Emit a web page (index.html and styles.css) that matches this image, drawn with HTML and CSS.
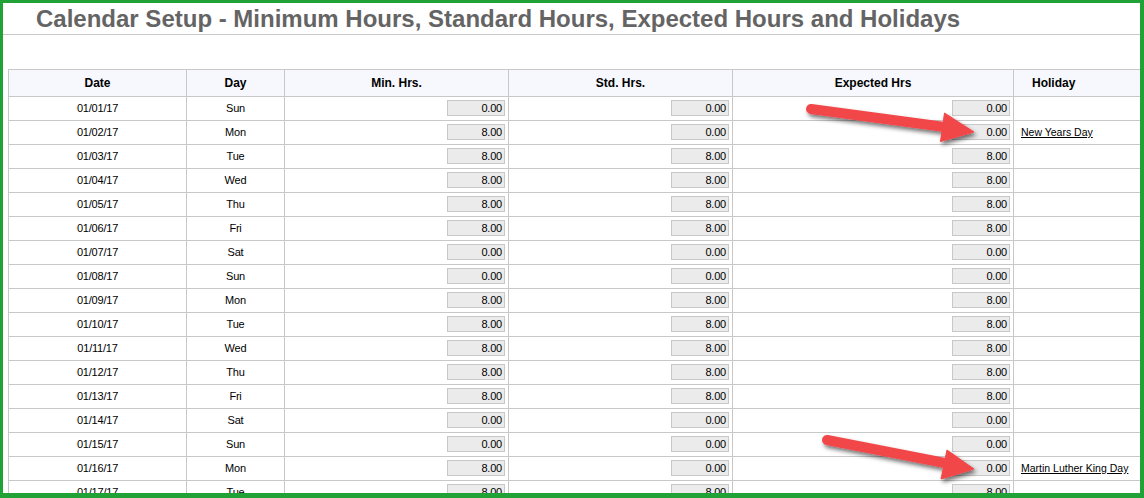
FILE: index.html
```html
<!DOCTYPE html>
<html>
<head>
<meta charset="utf-8">
<link rel="stylesheet" href="styles.css">
</head>
<body>
<div class="frame">
  <div class="title-bar"><h1 class="title">Calendar Setup - Minimum Hours, Standard Hours, Expected Hours and Holidays</h1></div>
  <div class="table-wrap">
    <table class="cal">
      <colgroup>
        <col class="c-date"><col class="c-day"><col class="c-min"><col class="c-std"><col class="c-exp"><col class="c-hol">
      </colgroup>
      <thead>
        <tr><th>Date</th><th>Day</th><th>Min. Hrs.</th><th>Std. Hrs.</th><th>Expected Hrs</th><th class="hol-h">Holiday</th></tr>
      </thead>
      <tbody>
        <tr><td>01/01/17</td><td>Sun</td><td class="num"><span class="box">0.00</span></td><td class="num"><span class="box">0.00</span></td><td class="num"><span class="box">0.00</span></td><td class="hol"></td></tr>
        <tr><td>01/02/17</td><td>Mon</td><td class="num"><span class="box">8.00</span></td><td class="num"><span class="box">0.00</span></td><td class="num"><span class="box">0.00</span></td><td class="hol"><a class="hol-link">New Years Day</a></td></tr>
        <tr><td>01/03/17</td><td>Tue</td><td class="num"><span class="box">8.00</span></td><td class="num"><span class="box">8.00</span></td><td class="num"><span class="box">8.00</span></td><td class="hol"></td></tr>
        <tr><td>01/04/17</td><td>Wed</td><td class="num"><span class="box">8.00</span></td><td class="num"><span class="box">8.00</span></td><td class="num"><span class="box">8.00</span></td><td class="hol"></td></tr>
        <tr><td>01/05/17</td><td>Thu</td><td class="num"><span class="box">8.00</span></td><td class="num"><span class="box">8.00</span></td><td class="num"><span class="box">8.00</span></td><td class="hol"></td></tr>
        <tr><td>01/06/17</td><td>Fri</td><td class="num"><span class="box">8.00</span></td><td class="num"><span class="box">8.00</span></td><td class="num"><span class="box">8.00</span></td><td class="hol"></td></tr>
        <tr><td>01/07/17</td><td>Sat</td><td class="num"><span class="box">0.00</span></td><td class="num"><span class="box">0.00</span></td><td class="num"><span class="box">0.00</span></td><td class="hol"></td></tr>
        <tr><td>01/08/17</td><td>Sun</td><td class="num"><span class="box">0.00</span></td><td class="num"><span class="box">0.00</span></td><td class="num"><span class="box">0.00</span></td><td class="hol"></td></tr>
        <tr><td>01/09/17</td><td>Mon</td><td class="num"><span class="box">8.00</span></td><td class="num"><span class="box">8.00</span></td><td class="num"><span class="box">8.00</span></td><td class="hol"></td></tr>
        <tr><td>01/10/17</td><td>Tue</td><td class="num"><span class="box">8.00</span></td><td class="num"><span class="box">8.00</span></td><td class="num"><span class="box">8.00</span></td><td class="hol"></td></tr>
        <tr><td>01/11/17</td><td>Wed</td><td class="num"><span class="box">8.00</span></td><td class="num"><span class="box">8.00</span></td><td class="num"><span class="box">8.00</span></td><td class="hol"></td></tr>
        <tr><td>01/12/17</td><td>Thu</td><td class="num"><span class="box">8.00</span></td><td class="num"><span class="box">8.00</span></td><td class="num"><span class="box">8.00</span></td><td class="hol"></td></tr>
        <tr><td>01/13/17</td><td>Fri</td><td class="num"><span class="box">8.00</span></td><td class="num"><span class="box">8.00</span></td><td class="num"><span class="box">8.00</span></td><td class="hol"></td></tr>
        <tr><td>01/14/17</td><td>Sat</td><td class="num"><span class="box">0.00</span></td><td class="num"><span class="box">0.00</span></td><td class="num"><span class="box">0.00</span></td><td class="hol"></td></tr>
        <tr><td>01/15/17</td><td>Sun</td><td class="num"><span class="box">0.00</span></td><td class="num"><span class="box">0.00</span></td><td class="num"><span class="box">0.00</span></td><td class="hol"></td></tr>
        <tr><td>01/16/17</td><td>Mon</td><td class="num"><span class="box">8.00</span></td><td class="num"><span class="box">0.00</span></td><td class="num"><span class="box">0.00</span></td><td class="hol"><a class="hol-link">Martin Luther King Day</a></td></tr>
        <tr><td>01/17/17</td><td>Tue</td><td class="num"><span class="box">8.00</span></td><td class="num"><span class="box">8.00</span></td><td class="num"><span class="box">8.00</span></td><td class="hol"></td></tr>
      </tbody>
    </table>
  </div>
  <svg class="arrows" width="1144" height="498" viewBox="0 0 1144 498" xmlns="http://www.w3.org/2000/svg">
    <defs>
      <filter id="shadow" x="-10%" y="-30%" width="130%" height="180%">
        <feDropShadow dx="2" dy="3" stdDeviation="2" flood-color="#000" flood-opacity="0.55"/>
      </filter>
    </defs>
    <g filter="url(#shadow)" fill="#f2474a" stroke="#f2474a">
      <line x1="811" y1="109" x2="945" y2="127" stroke-width="10" stroke-linecap="round"/>
      <polygon points="944.5,113 940.5,141.5 974,132" stroke-width="1" stroke-linejoin="round"/>
      <line x1="827" y1="440" x2="945" y2="463" stroke-width="10" stroke-linecap="round"/>
      <polygon points="947,450 941,479 974,469" stroke-width="1" stroke-linejoin="round"/>
    </g>
  </svg>
</div>
</body>
</html>
```

FILE: styles.css
```css
html, body {
  margin: 0;
  padding: 0;
  background: #ffffff;
}

.frame {
  position: relative;
  width: 1144px;
  height: 498px;
  box-sizing: border-box;
  border-style: solid;
  border-color: #21a236;
  border-width: 3px 4px 5px 3px;
  background: #ffffff;
  overflow: hidden;
  font-family: "Liberation Sans", Arial, sans-serif;
}

.title-bar {
  height: 31px;
  border-bottom: 1px solid #c8c8c8;
}

.title {
  margin: 0;
  padding-left: 33px;
  font-size: 24px;
  line-height: 31px;
  font-weight: bold;
  color: #646464;
  white-space: nowrap;
}

.table-wrap {
  margin-top: 34px;
  padding-left: 5px;
}

.cal {
  border-collapse: collapse;
  table-layout: fixed;
  width: 1160px;
  font-size: 11px;
  letter-spacing: -0.2px;
  color: #000;
}

.c-date { width: 178px; }
.c-day { width: 98px; }
.c-min { width: 224px; }
.c-std { width: 224px; }
.c-exp { width: 281px; }
.c-hol { width: 155px; }

.cal th,
.cal td {
  border: 1px solid #c8c8c8;
  padding: 0;
  text-align: center;
  white-space: nowrap;
}

.cal th {
  height: 26px;
  background: #f6f8fd;
  font-weight: bold;
  font-size: 12px;
  letter-spacing: 0;
}

.cal th.hol-h {
  text-align: left;
  padding-left: 18px;
}

.cal td {
  height: 22px;
  padding-bottom: 1px;
}

.cal td.num {
  text-align: right;
  padding-right: 3px;
}

.cal td.hol {
  text-align: left;
  padding-left: 7px;
}

.box {
  display: inline-block;
  vertical-align: middle;
  box-sizing: border-box;
  width: 58px;
  height: 16px;
  line-height: 14px;
  padding-right: 2px;
  border: 1px solid #c8c8c8;
  background: #ebebeb;
  text-align: right;
  font-size: 11px;
  color: #000;
}

.hol-link {
  color: #000;
  text-decoration: underline;
  font-size: 10.5px;
  letter-spacing: 0;
}

.arrows {
  position: absolute;
  left: -3px;
  top: -3px;
  pointer-events: none;
}
```
